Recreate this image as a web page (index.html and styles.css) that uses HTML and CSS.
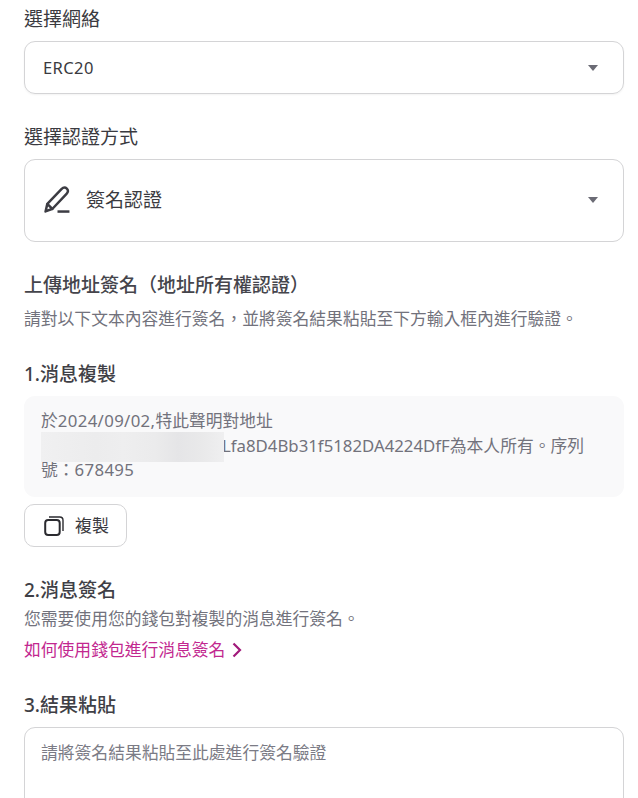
FILE: index.html
```html
<!DOCTYPE html>
<html lang="zh-Hant">
<head>
<meta charset="utf-8">
<title>選擇網絡</title>
<link rel="stylesheet" href="styles.css">
</head>
<body>
<main class="form">
  <div class="label first">選擇網絡</div>
  <div class="select net"><span class="latin">ERC20</span><i class="caret"></i></div>

  <div class="label second">選擇認證方式</div>
  <div class="select method">
    <svg class="pen" viewBox="0 0 26 26" width="27" height="27" fill="none" stroke="#3c3c43" stroke-width="2.4" stroke-linejoin="round" stroke-linecap="round">
      <path d="M1.5 24.5 L3.2 17.2 L16.8 3 C18.4 1.4 20.4 1 22 2.5 C23.6 4 23.3 6 21.7 7.6 L8.2 21.9 Z"/>
      <path d="M3.4 17.4 L8 22"/>
      <path d="M13 24.6 H24.5" stroke-linecap="butt"/>
    </svg>
    <span class="method-text">簽名認證</span><i class="caret"></i>
  </div>

  <h2 class="upload-title">上傳地址簽名（地址所有權認證）</h2>
  <p class="hint upload-hint">請對以下文本內容進行簽名，並將簽名結果粘貼至下方輸入框內進行驗證。</p>

  <h3 class="step step-one">1.消息複製</h3>
  <div class="message">
    於<span class="num">2024/09/02,</span>特此聲明對地址<br>
    <span class="addr"><span class="blur"></span></span>Lfa8D4Bb31f5182DA4224DfF為本人所有。序列<br>
    號：<span class="num">678495</span>
  </div>
  <div class="copy">
    <svg viewBox="0 0 20 20" width="20" height="20" fill="none" stroke="#2b2b30" stroke-width="2">
      <rect x="1.2" y="4" width="14.5" height="15" rx="3"/>
      <path d="M5 1 H15.8 Q19 1 19 4.2 V15" stroke-width="1.4"/>
    </svg>
    <span class="copy-text">複製</span>
  </div>

  <h3 class="step step-two">2.消息簽名</h3>
  <p class="hint sign-hint">您需要使用您的錢包對複製的消息進行簽名。</p>
  <a class="link" href="#">如何使用錢包進行消息簽名
    <svg viewBox="0 0 10 16" width="10" height="16" fill="none" stroke="#a11a7b" stroke-width="2.2"><path d="M1.5 1.5 L8 8 L1.5 14.5"/></svg>
  </a>

  <h3 class="step step-three">3.結果粘貼</h3>
  <div class="result">請將簽名結果粘貼至此處進行簽名驗證</div>
</main>
</body>
</html>
```

FILE: styles.css
```css
* { box-sizing: border-box; }
html, body { margin: 0; height: 798px; overflow: hidden; background: #fff; }
body {
  font-family: "Noto Sans", "Noto Sans CJK TC", sans-serif;
  color: #3a3a40;
}
.form { padding: 0 14px 0 24px; display: flex; flex-direction: column; align-items: stretch; }
.label { font-size: 19px; line-height: 26px; color: #3a3a40; }
.first { margin-top: 6px; }
.second { margin-top: 30px; }
.select {
  display: flex; align-items: center;
  border: 1px solid #d4d4d6; border-radius: 11px;
  padding: 0 25px 0 18px;
  box-shadow: 0 1px 2px rgba(0,0,0,.05);
}
.net { height: 53px; margin-top: 9px; font-size: 16.5px; letter-spacing: .4px; }
.method { height: 83px; margin-top: 9px; box-shadow: none; }
.pen { margin-left: 1px; margin-top: -2px; flex: none; }
.method-text { margin-left: 15px; font-size: 19px; margin-top: -4px; }
.caret {
  margin-left: auto; width: 0; height: 0;
  border-left: 5px solid transparent; border-right: 5px solid transparent; border-top: 6px solid #6b6b75;
}
.method .caret { margin-top: -2px; }
.upload-title { margin: 30px 0 0; font-size: 19px; line-height: 26px; font-weight: 500; color: #45454c; }
.hint { margin: 0; font-size: 16.8px; line-height: 24px; color: #72727c; }
.upload-hint { margin-top: 9px; }
.step { margin: 0; font-size: 19px; line-height: 26px; font-weight: 500; color: #3f3f46; }
.step-one { margin-top: 30px; }
.message {
  margin-top: 9px; background: #f9f9fa; border-radius: 11px;
  height: 101px; padding: 13px 17px; font-size: 16.8px; line-height: 24.5px; color: #72727c;
}
.num { letter-spacing: .35px; }
.addr { position: relative; display: inline-block; width: 181px; height: 24px; vertical-align: bottom; }
.blur {
  position: absolute; left: 0; top: -2px; bottom: -4px; right: -2px;
  background: linear-gradient(90deg, #f0f0f1, #ececed 30%, #eeeeef 45%, #ebebec 62%, #e5e5e7 75%, #e9e9ea 88%, #efeff0);
}
.copy {
  margin-top: 7px; width: 103px; height: 43px; border: 1px solid #d4d4d6; border-radius: 10px;
  display: flex; align-items: center; gap: 11px; padding-left: 19px; font-size: 17px; color: #3a3a40;
}
.copy-text { margin-top: -3px; }
.step-two { margin-top: 30px; }
.sign-hint { margin-top: 4px; }
.link {
  margin-top: 7px; display: flex; align-items: center; gap: 7px;
  font-size: 16.8px; line-height: 24px; color: #c2278f; text-decoration: none;
}
.step-three { margin-top: 30px; }
.result {
  margin-top: 9px; height: 120px; border: 1px solid #d4d4d6; border-radius: 11px;
  padding: 13px 16px; font-size: 16.8px; line-height: 24px; color: #7b7b85;
}
```
